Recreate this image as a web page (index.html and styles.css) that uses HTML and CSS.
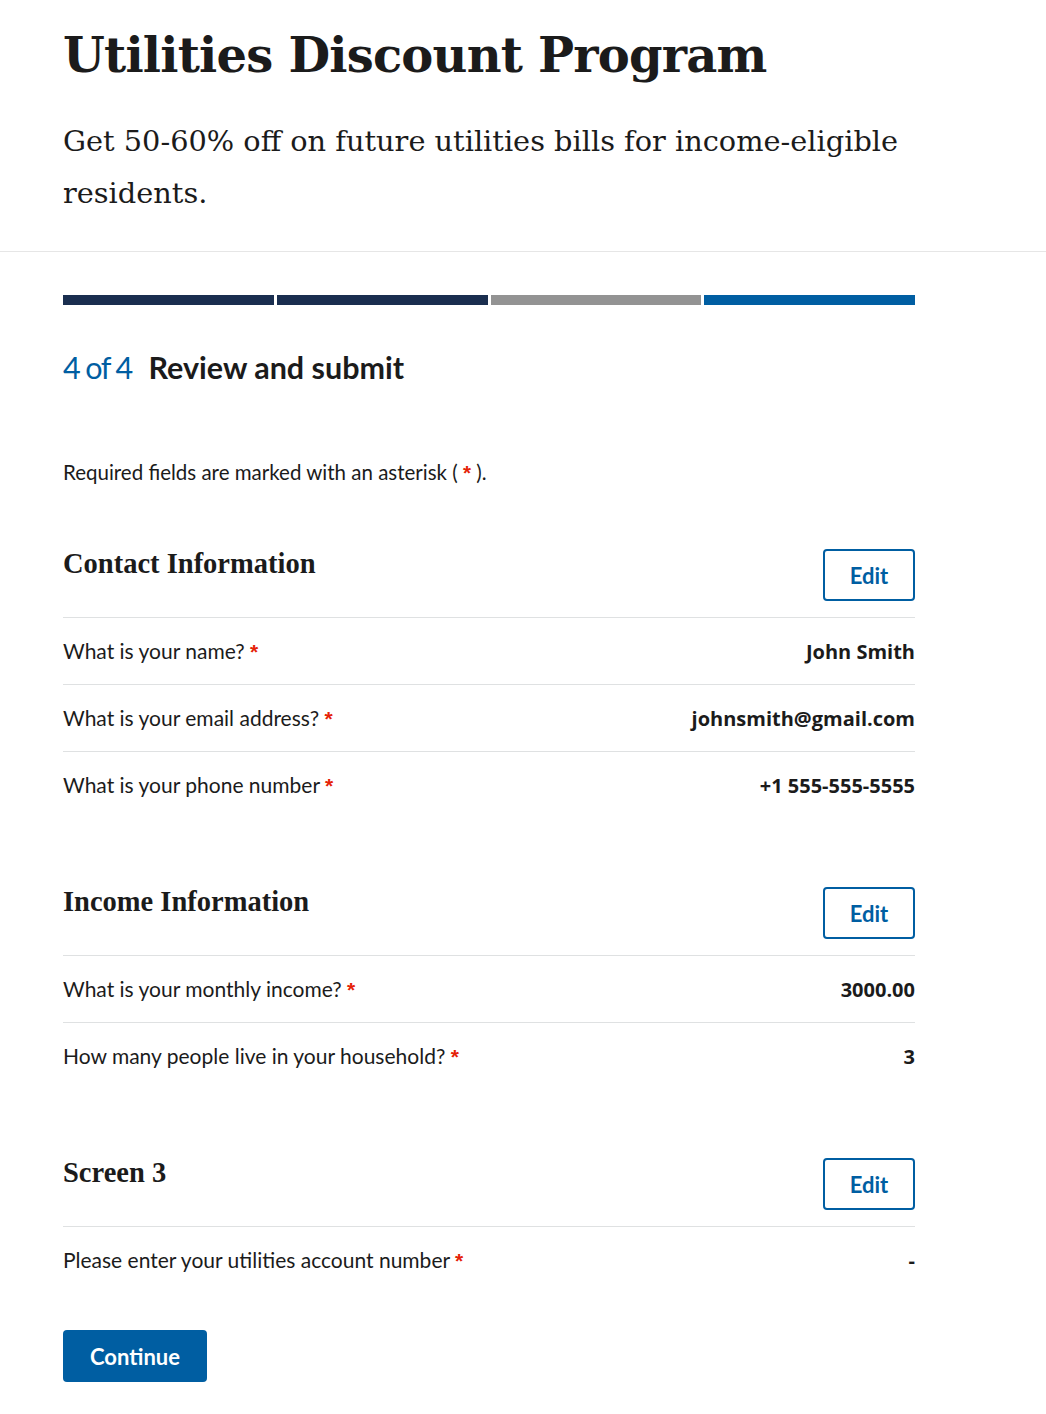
FILE: index.html
```html
<!DOCTYPE html>
<html lang="en">
<head>
<meta charset="utf-8">
<title>Utilities Discount Program</title>
<link rel="stylesheet" href="styles.css">
</head>
<body>
<header class="page-header">
  <div class="container">
    <h1 class="title">Utilities Discount Program</h1>
    <p class="lead">Get 50-60% off on future utilities bills for income-eligible residents.</p>
  </div>
</header>
<main class="container">
  <div class="steps">
    <span class="seg seg-done"></span>
    <span class="seg seg-done"></span>
    <span class="seg seg-todo"></span>
    <span class="seg seg-current"></span>
  </div>
  <h2 class="step-heading"><span class="step-count">4 of 4</span><span class="step-label">Review and submit</span></h2>
  <p class="required-note">Required fields are marked with an asterisk ( <span class="req">*</span> ).</p>

  <section class="review">
    <div class="review-head">
      <h3 class="review-title">Contact Information</h3>
      <button class="btn-edit" type="button">Edit</button>
    </div>
    <div class="row"><span class="q">What is your name? <span class="req">*</span></span><span class="a">John Smith</span></div>
    <div class="row"><span class="q">What is your email address? <span class="req">*</span></span><span class="a">johnsmith@gmail.com</span></div>
    <div class="row"><span class="q">What is your phone number <span class="req">*</span></span><span class="a">+1 555-555-5555</span></div>
  </section>

  <section class="review">
    <div class="review-head">
      <h3 class="review-title">Income Information</h3>
      <button class="btn-edit" type="button">Edit</button>
    </div>
    <div class="row"><span class="q">What is your monthly income? <span class="req">*</span></span><span class="a">3000.00</span></div>
    <div class="row"><span class="q">How many people live in your household? <span class="req">*</span></span><span class="a">3</span></div>
  </section>

  <section class="review">
    <div class="review-head">
      <h3 class="review-title">Screen 3</h3>
      <button class="btn-edit" type="button">Edit</button>
    </div>
    <div class="row"><span class="q">Please enter your utilities account number <span class="req">*</span></span><span class="a">-</span></div>
  </section>

  <button class="btn-primary" type="button">Continue</button>
</main>
</body>
</html>
```
FILE: styles.css
```css
* { box-sizing: border-box; }
html, body { margin: 0; padding: 0; background: #fff; }
body {
  font-family: "Lato", "Liberation Sans", sans-serif;
  color: #1b1b1b;
  font-size: 21px;
}
.container {
  margin-left: 63px;
  width: 852px;
}
.page-header {
  border-bottom: 1px solid #e6e6e6;
  padding-top: 26px;
  padding-bottom: 32px;
}
.title {
  margin: 0;
  font-family: "DejaVu Serif", "Liberation Serif", serif;
  font-weight: 700;
  font-size: 48px;
  line-height: 58px;
  letter-spacing: -0.8px;
  white-space: nowrap;
}
.lead {
  margin: 31px 0 0;
  font-family: "DejaVu Serif", "Liberation Serif", serif;
  font-size: 28.8px;
  line-height: 52px;
  width: 900px;
}
.steps {
  margin-top: 43px;
  display: flex;
  gap: 3px;
  height: 10px;
}
.seg { flex: 1; height: 10px; }
.seg-done { background: #1a2e4f; }
.seg-todo { background: #939393; }
.seg-current { background: #005ea2; }
.step-heading {
  margin: 42px 0 0;
  height: 40px;
  display: flex;
  align-items: center;
  font-size: 30.5px;
  line-height: 40px;
}
.step-count {
  color: #005ea2;
  font-weight: 400;
  letter-spacing: -1.6px;
  margin-right: 17px;
}
.step-label { font-weight: 700; }
.required-note {
  margin: 70px 0 0;
  line-height: 30px;
  font-size: 20.5px;
}
.req {
  color: #e52207;
  font-family: "Liberation Sans", "DejaVu Sans", sans-serif;
  font-weight: 700;
}
.review { margin-top: 61px; }
.review + .review { margin-top: 69px; }
.review-head {
  display: flex;
  justify-content: space-between;
  align-items: flex-start;
  padding-bottom: 16px;
  border-bottom: 1px solid #dfe1e2;
}
.review-title {
  margin: 0;
  font-family: "Liberation Serif", "Times New Roman", serif;
  font-weight: 700;
  font-size: 28.5px;
  line-height: 30px;
}
.btn-edit {
  width: 92px;
  height: 52px;
  border: 2px solid #005ea2;
  border-radius: 4px;
  background: #fff;
  color: #005ea2;
  font-family: "Lato", "Liberation Sans", sans-serif;
  font-weight: 700;
  font-size: 22px;
  padding: 0;
}
.row {
  display: flex;
  justify-content: space-between;
  align-items: center;
  height: 67px;
  border-bottom: 1px solid #dfe1e2;
}
.row:last-child { border-bottom: none; height: 66px; }
.a {
  font-family: "Open Sans", "Lato", sans-serif;
  font-weight: 700;
  font-size: 20px;
}
.btn-primary {
  margin-top: 37px;
  width: 144px;
  height: 52px;
  border: none;
  border-radius: 4px;
  background: #005ea2;
  color: #fff;
  font-family: "Lato", "Liberation Sans", sans-serif;
  font-weight: 700;
  font-size: 22px;
  padding: 0;
}
```
